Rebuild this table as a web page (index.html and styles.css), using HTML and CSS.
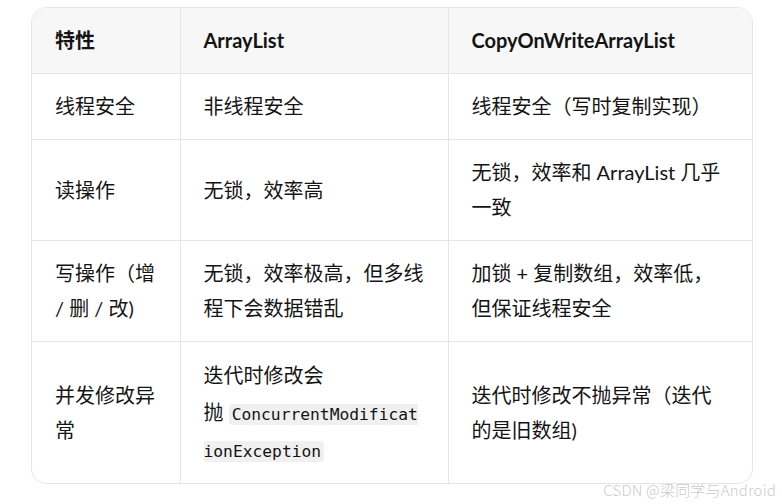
FILE: index.html
```html
<!DOCTYPE html>
<html lang="zh-CN">
<head>
<meta charset="utf-8">
<title>ArrayList vs CopyOnWriteArrayList</title>
<link rel="stylesheet" href="styles.css">
</head>
<body>
<div class="page">
  <div class="table-wrap">
    <table class="cmp">
      <colgroup>
        <col class="c1"><col class="c2"><col class="c3">
      </colgroup>
      <thead>
        <tr><th>特性</th><th>ArrayList</th><th>CopyOnWriteArrayList</th></tr>
      </thead>
      <tbody>
        <tr><td>线程安全</td><td>非线程安全</td><td>线程安全（写时复制实现）</td></tr>
        <tr><td>读操作</td><td>无锁，效率高</td><td>无锁，效率和 ArrayList 几乎一致</td></tr>
        <tr><td>写操作（增 / 删 / 改)</td><td>无锁，效率极高，但多线程下会数据错乱</td><td>加锁 + 复制数组，效率低，但保证线程安全</td></tr>
        <tr class="last"><td>并发修改异常</td><td class="code-cell">迭代时修改会<span class="glue">抛&nbsp;<code>ConcurrentModificationException</code></span></td><td>迭代时修改不抛异常（迭代的是旧数组)</td></tr>
      </tbody>
    </table>
  </div>
  <div class="watermark">CSDN @梁同学与Android</div>
</div>
</body>
</html>
```

FILE: styles.css
```css
html, body {
  margin: 0;
  padding: 0;
  background: #ffffff;
}
.page {
  width: 782px;
  height: 504px;
  padding: 7px 0 0 31px;
  box-sizing: border-box;
  position: relative;
  font-family: "Lato", "Noto Sans CJK SC", sans-serif;
  color: #141414;
}
.table-wrap {
  width: 722px;
  border: 1px solid #e6e6e6;
  border-radius: 15px;
  overflow: hidden;
  box-sizing: border-box;
}
.cmp {
  width: 100%;
  border-collapse: collapse;
  table-layout: fixed;
  font-size: 20px;
  line-height: 35px;
}
.c1 { width: 148px; }
.c2 { width: 268px; }
.c3 { width: auto; }
.cmp th, .cmp td {
  padding: 15px 23px;
  text-align: left;
  vertical-align: middle;
  border-right: 1px solid #e6e6e6;
  border-bottom: 1px solid #e6e6e6;
}
.cmp th:last-child, .cmp td:last-child { border-right: none; }
.cmp tr.last td { border-bottom: none; }
.cmp thead th {
  background: #f7f7f7;
  font-weight: 700;
}
.cmp td.code-cell {
  line-height: 37px;
}
.glue {
  overflow-wrap: anywhere;
}
.cmp code {
  font-family: "DejaVu Sans Mono", monospace;
  font-size: 16.3px;
  line-height: 20px;
  background: #f0f0f0;
  border-radius: 4px;
  padding: 1px 3px;
  color: #141414;
  overflow-wrap: anywhere;
}
.watermark {
  position: absolute;
  right: 6px;
  bottom: 5px;
  font-family: "Noto Sans CJK SC", sans-serif;
  font-weight: 300;
  font-size: 15px;
  line-height: 18px;
  letter-spacing: 0.2px;
  color: #cbcbcb;
  text-shadow: 0 0 1px #fff;
}
```
